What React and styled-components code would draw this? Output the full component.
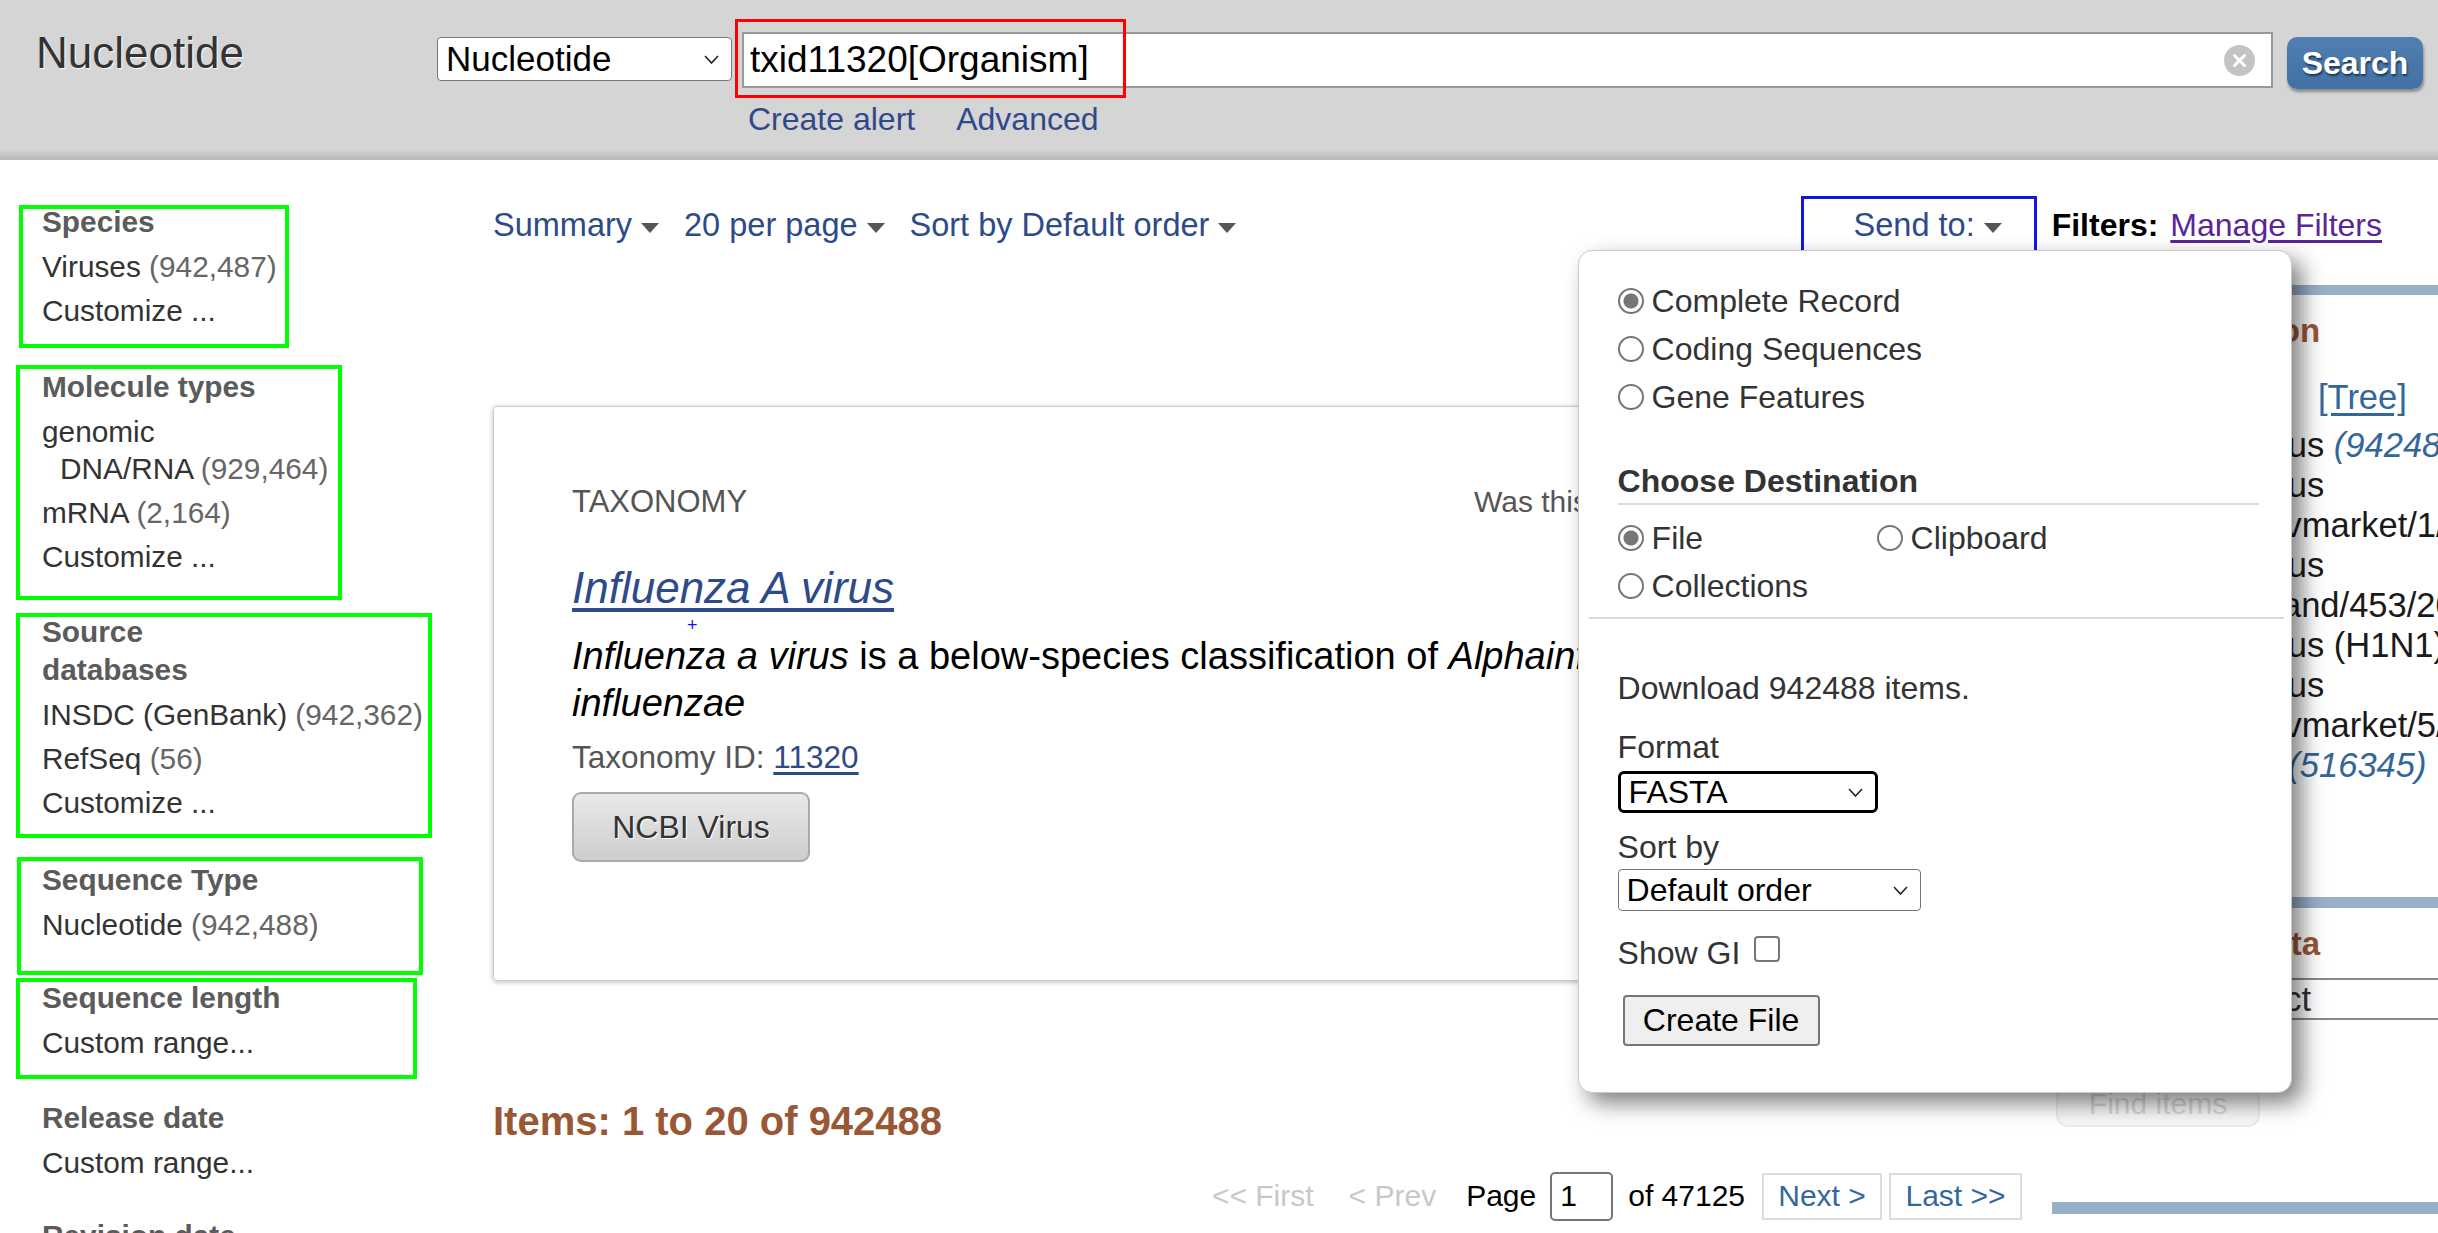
import React from 'react'
import styled, { createGlobalStyle } from 'styled-components'

const GlobalStyle = createGlobalStyle`
  html, body {
    margin: 0;
    padding: 0;
    background: #fff;
    overflow: hidden;
  }
  body {
    font-family: "Liberation Sans", Arial, Helvetica, sans-serif;
    color: #333;
  }
  * {
    box-sizing: border-box;
  }
`

const Page = styled.div`
  width: 2438px;
  height: 1233px;
  overflow: hidden;
`

/* ---------- masthead ---------- */

const Masthead = styled.header`
  height: 160px;
  display: flex;
  align-items: flex-start;
  background: linear-gradient(to bottom, #d5d5d5 0, #d5d5d5 149px, #c6c6c6 155px, #b7b7b7 160px);
`

const DbName = styled.div`
  width: 437px;
  padding: 28px 0 0 36px;
  font-size: 44px;
  line-height: 50px;
  color: #333;
  text-shadow: 1px 1px 1px #fff;
`

const SearchArea = styled.div`
  padding-top: 32px;
  display: flex;
  flex-direction: column;
`

const SearchRow = styled.div`
  display: flex;
  align-items: flex-start;
`

const SelectBox = styled.div`
  margin-top: ${p => p.$mt || 0}px;
  width: ${p => p.$w}px;
  height: ${p => p.$h || 42}px;
  padding: 0 12px 0 8px;
  display: flex;
  align-items: center;
  justify-content: space-between;
  background: #fff;
  border: ${p => (p.$focus ? '3px solid #000' : '1px solid #767676')};
  border-radius: ${p => (p.$focus ? 6 : 4)}px;
  font-size: ${p => p.$fs || 32}px;
  color: #000;
  white-space: nowrap;
  overflow: hidden;
`

const TermField = styled.div`
  position: relative;
  margin-left: 10px;
  width: 1531px;
  height: 56px;
  display: flex;
  align-items: center;
  background: #fff;
  border: 2px solid #999;
  padding: 0 16px 0 6px;
`

const TermInput = styled.input`
  flex: 1;
  border: none;
  outline: none;
  padding: 0;
  background: transparent;
  font-family: inherit;
  font-size: 37px;
  color: #000;
`

const Highlight = styled.div`
  position: absolute;
  left: ${p => p.$x}px;
  top: ${p => p.$y}px;
  width: ${p => p.$w}px;
  height: ${p => p.$h}px;
  border: 3px solid ${p => p.$color};
  pointer-events: none;
`

const SearchButton = styled.button`
  margin: 5px 0 0 14px;
  width: 136px;
  height: 52px;
  border: none;
  border-radius: 10px;
  background: linear-gradient(#527fb2, #4170a4);
  color: #fff;
  font-family: "Liberation Sans", Arial, sans-serif;
  font-weight: bold;
  font-size: 32px;
  text-shadow: 1px 2px 2px #1d3553;
  box-shadow: 1px 3px 3px rgba(0, 0, 0, 0.35);
`

const SearchLinks = styled.div`
  margin-top: 12px;
  padding-left: 311px;
  display: flex;
  gap: 41px;
  font-size: 32px;
  line-height: 36px;
  color: #30498a;
`

/* ---------- body ---------- */

const Body = styled.div`
  display: grid;
  grid-template-columns: 493px 1945px;
`

const Sidebar = styled.aside`
  padding: 45px 0 0 16px;
  display: flex;
  flex-direction: column;
`

const Facet = styled.section`
  width: ${p => p.$w}px;
  margin: ${p => p.$mt}px 0 0 ${p => p.$ml}px;
  padding: 0 0 ${p => p.$pb}px ${p => 22 - p.$ml}px;
  border: 4px solid ${p => (p.$boxed ? '#00ff00' : 'transparent')};
`

const FacetTitle = styled.h3`
  margin: ${p => p.$ht}px 0 0;
  font-size: 29.8px;
  line-height: 38px;
  font-weight: bold;
  color: #5b5b5b;
`

const FacetItem = styled.div`
  margin-top: 7px;
  font-size: 29.8px;
  line-height: 37px;
  color: #333;
  white-space: nowrap;
  padding-left: ${p => (p.$hang ? 18 : 0)}px;
  text-indent: ${p => (p.$hang ? -18 : 0)}px;
`

const Count = styled.span`
  color: #666;
`

const Content = styled.div`
  display: flex;
  flex-direction: column;
`

const Toolbar = styled.div`
  margin-top: 45px;
  height: 40px;
  padding-right: 56px;
  display: flex;
  align-items: center;
  justify-content: space-between;
`

const ToolGroup = styled.div`
  display: flex;
  align-items: center;
  gap: ${p => p.$gap}px;
`

const ToolLink = styled.span`
  position: relative;
  display: inline-flex;
  align-items: center;
  font-size: 32.5px;
  line-height: 40px;
  color: #2d4a8a;
  white-space: nowrap;
`

const Caret = styled.span`
  margin: 6px 0 0 9px;
  border-left: 9px solid transparent;
  border-right: 9px solid transparent;
  border-top: 10px solid #555;
`

const FilterLabel = styled.span`
  font-size: 32px;
  font-weight: bold;
  color: #000;
`

const FilterLink = styled.span`
  margin-left: 12px;
  font-size: 32px;
  color: #5b2597;
  text-decoration: underline;
  text-underline-offset: 4px;
`

const Columns = styled.div`
  display: grid;
  grid-template-columns: 1527px 386px;
  column-gap: 32px;
`

const MainCol = styled.main`
  padding-top: 161px;
  display: flex;
  flex-direction: column;
`

const Card = styled.section`
  position: relative;
  height: 575px;
  padding: 77px 60px 0 78px;
  border: 1px solid #cfcfcf;
  border-radius: 4px;
  box-shadow: 0 1px 5px rgba(0, 0, 0, 0.28);
`

const CardHead = styled.div`
  display: flex;
  justify-content: space-between;
  font-size: 31px;
  line-height: 36px;
  color: #555;
`

const Helpful = styled.div`
  width: 485px;
  font-size: 30px;
  white-space: nowrap;
`

const TaxTitle = styled.a`
  display: inline-block;
  margin-top: 43px;
  font-size: 44px;
  line-height: 50px;
  font-style: italic;
  color: #2d4a8a;
  text-decoration: underline;
  text-underline-offset: 5px;
`

const Cursor = styled.span`
  position: absolute;
  left: 193px;
  top: 208px;
  font-size: 18px;
  line-height: 20px;
  color: #1010ff;
`

const Description = styled.p`
  margin: 20px 0 0;
  max-width: 1300px;
  font-size: 38px;
  line-height: 47px;
  color: #000;
`

const TaxId = styled.div`
  margin-top: 10px;
  font-size: 31.5px;
  line-height: 40px;
  color: #555;
  a {
    color: #2d4a8a;
    text-decoration: underline;
    text-underline-offset: 4px;
  }
`

const VirusButton = styled.button`
  display: block;
  margin-top: 15px;
  width: 238px;
  height: 70px;
  border: 2px solid #aaa;
  border-radius: 9px;
  background: linear-gradient(#e9e9e9, #cdcdcd);
  font-family: inherit;
  font-size: 32px;
  color: #333;
  text-shadow: 1px 1px 0 #fff;
`

const ItemsCount = styled.h2`
  margin: 117px 0 0;
  font-size: 40px;
  line-height: 46px;
  font-weight: bold;
  color: #985735;
`

const Pager = styled.div`
  margin: 27px -2px 0 0;
  height: 50px;
  display: flex;
  align-items: center;
  justify-content: flex-end;
  font-size: 30px;
  color: #000;
`

const PagerText = styled.span`
  margin-left: ${p => p.$ml || 0}px;
  color: ${p => (p.$muted ? '#c8c8c8' : '#000')};
  white-space: nowrap;
`

const PageInput = styled.div`
  margin-left: 14px;
  width: 63px;
  height: 49px;
  padding-left: 8px;
  display: flex;
  align-items: center;
  border: 2px solid #767676;
  border-radius: 5px;
`

const PagerButton = styled.span`
  margin-left: ${p => p.$ml}px;
  width: ${p => p.$w}px;
  height: 47px;
  display: flex;
  align-items: center;
  justify-content: center;
  border: 2px solid #dcdcdc;
  color: #35679f;
  white-space: nowrap;
`

/* ---------- right column ---------- */

const RightCol = styled.aside`
  overflow: hidden;
  font-size: 34.5px;
`

const PortletBar = styled.div`
  margin-top: ${p => p.$mt}px;
  height: ${p => p.$h}px;
  background: #98afc8;
`

const PortletTitle = styled.h3`
  margin: 18px 0 0;
  padding-left: 4px;
  font-size: 33px;
  line-height: 36px;
  font-weight: bold;
  color: #985735;
  white-space: nowrap;
`

const SubTitle = styled.div`
  margin-top: 28px;
  padding-left: 9px;
  line-height: 40px;
  color: #333;
  white-space: nowrap;
  a {
    margin-left: 25px;
    color: #336699;
    text-decoration: underline;
    text-underline-offset: 4px;
  }
`

const OrgList = styled.div`
  margin-top: 8px;
  padding-left: 21px;
`

const OrgLine = styled.div`
  line-height: 40px;
  color: #1a1a1a;
  white-space: nowrap;
`

const OrgCount = styled.i`
  margin-left: ${p => p.$gap || 0}px;
  color: #336699;
`

const DbRow = styled.div`
  margin-top: 16px;
  height: 42px;
  display: flex;
  align-items: center;
  white-space: nowrap;
`

const DbPick = styled.div`
  margin-left: 2px;
  width: 260px;
  height: 42px;
  padding-left: 2px;
  display: flex;
  align-items: center;
  border: 2px solid #888;
  border-right: none;
  border-radius: 4px 0 0 4px;
`

const FindButton = styled.div`
  margin: 61px 0 0 4px;
  width: 204px;
  height: 46px;
  display: flex;
  align-items: center;
  justify-content: center;
  border: 2px solid #ececec;
  border-radius: 12px;
  background: #f7f7f7;
  color: #d6d6d6;
  font-size: 30px;
`

/* ---------- send to popup ---------- */

const SendMenu = styled.div`
  position: absolute;
  left: -276px;
  top: 45px;
  width: 714px;
  height: 843px;
  padding: 26px 0 0 39px;
  z-index: 10;
  background: #fff;
  border: 1px solid #c8c8c8;
  border-radius: 14px;
  box-shadow: 10px 10px 22px rgba(0, 0, 0, 0.5);
  font-size: 32px;
  color: #333;
`

const ChoiceGrid = styled.div`
  display: grid;
  grid-template-columns: ${p => p.$cols || '1fr'};
`

const Choice = styled.label`
  height: 48px;
  display: flex;
  align-items: center;
  white-space: nowrap;
`

const Radio = styled.span`
  width: 26px;
  height: 26px;
  margin-right: 8px;
  border-radius: 50%;
  border: 2px solid #767676;
  background: ${p => (p.$on ? 'radial-gradient(circle, #767676 0 7px, #fff 8px)' : '#fff')};
`

const MenuHeading = styled.div`
  margin-top: 41px;
  width: 641px;
  padding-bottom: 3px;
  border-bottom: 2px solid #dadada;
  font-weight: bold;
  line-height: 38px;
`

const ChoiceBlock = styled.div`
  margin-top: 9px;
`

const Rule = styled.div`
  margin: 7px 0 0 -29px;
  width: 695px;
  border-top: 2px solid #dadada;
`

const MenuText = styled.div`
  margin-top: ${p => p.$mt}px;
  line-height: 38px;
  display: flex;
  align-items: center;
`

const CheckBox = styled.span`
  margin: -8px 0 0 14px;
  width: 26px;
  height: 26px;
  border: 2px solid #767676;
  border-radius: 4px;
  background: #fff;
`

const CreateButton = styled.button`
  display: block;
  margin: 23px 0 0 5px;
  width: 197px;
  height: 51px;
  border: 2px solid #767676;
  border-radius: 4px;
  background: #efefef;
  font-family: inherit;
  font-size: 32px;
  color: #000;
`

const Chevron = () => (
  <svg width="15" height="9" viewBox="0 0 15 9">
    <polyline points="1,1 7.5,8 14,1" fill="none" stroke="#222" strokeWidth="1.6" />
  </svg>
)

const ClearIcon = () => (
  <svg width="31" height="31" viewBox="0 0 31 31">
    <circle cx="15.5" cy="15.5" r="15.5" fill="#c4c4c4" />
    <path d="M10.5 10.5 L20.5 20.5 M20.5 10.5 L10.5 20.5" stroke="#fff" strokeWidth="3" strokeLinecap="round" />
  </svg>
)

const facets = [
  {
    title: ['Species'],
    items: [{ label: ['Viruses'], count: '(942,487)' }, { label: ['Customize ...'] }],
    box: { w: 270, ml: 3, mt: 0, ht: -6, pb: 15, boxed: true },
  },
  {
    title: ['Molecule types'],
    items: [
      { label: ['genomic', 'DNA/RNA'], count: '(929,464)', hang: true },
      { label: ['mRNA'], count: '(2,164)' },
      { label: ['Customize ...'] },
    ],
    box: { w: 326, ml: 0, mt: 17, ht: -1, pb: 21, boxed: true },
  },
  {
    title: ['Source', 'databases'],
    items: [
      { label: ['INSDC (GenBank)'], count: '(942,362)' },
      { label: ['RefSeq'], count: '(56)' },
      { label: ['Customize ...'] },
    ],
    box: { w: 416, ml: 0, mt: 13, ht: -4, pb: 13, boxed: true },
  },
  {
    title: ['Sequence Type'],
    items: [{ label: ['Nucleotide'], count: '(942,488)' }],
    box: { w: 406, ml: 1, mt: 19, ht: 0, pb: 28, boxed: true },
  },
  {
    title: ['Sequence length'],
    items: [{ label: ['Custom range...'] }],
    box: { w: 401, ml: 0, mt: 3, ht: -3, pb: 14, boxed: true },
  },
  {
    title: ['Release date'],
    items: [{ label: ['Custom range...'] }],
    box: { w: 420, ml: 0, mt: 16, ht: 0, pb: 0, boxed: false },
  },
  {
    title: ['Revision date'],
    items: [{ label: ['Custom range...'] }],
    box: { w: 420, ml: 0, mt: 28, ht: 0, pb: 0, boxed: false },
  },
]

const organisms = [
  { text: 'Influenza A virus', count: ' (942488)' },
  { text: 'Influenza A virus' },
  { text: '(A/duck/Tibet/vmarket/1/2019(H9N2))' },
  { text: 'Influenza A virus' },
  { text: '(A/swan/Thailand/453/2011)' },
  { text: 'Influenza A virus (H1N1)' },
  { text: 'Influenza A virus' },
  { text: '(A/duck/Tibet/vmarket/5/2019(H9N2))' },
  { text: 'All other taxa', count: '(516345)', gap: 14 },
]

const joinLines = lines =>
  lines.map((line, i) => (
    <React.Fragment key={i}>
      {i > 0 && <br />}
      {line}
    </React.Fragment>
  ))

const SendToMenu = () => (
  <SendMenu>
    <ChoiceGrid>
      <Choice><Radio $on />Complete Record</Choice>
      <Choice><Radio />Coding Sequences</Choice>
      <Choice><Radio />Gene Features</Choice>
    </ChoiceGrid>
    <MenuHeading>Choose Destination</MenuHeading>
    <ChoiceBlock>
      <ChoiceGrid $cols="259px 1fr">
        <Choice><Radio $on />File</Choice>
        <Choice><Radio />Clipboard</Choice>
        <Choice><Radio />Collections</Choice>
      </ChoiceGrid>
    </ChoiceBlock>
    <Rule />
    <MenuText $mt={50}>Download 942488 items.</MenuText>
    <MenuText $mt={21}>Format</MenuText>
    <SelectBox $mt={5} $w={260} $focus>
      FASTA
      <Chevron />
    </SelectBox>
    <MenuText $mt={15}>Sort by</MenuText>
    <SelectBox $mt={3} $w={303}>
      Default order
      <Chevron />
    </SelectBox>
    <MenuText $mt={23}>
      Show GI
      <CheckBox />
    </MenuText>
    <CreateButton>Create File</CreateButton>
  </SendMenu>
)

export default function App() {
  return (
    <Page>
      <GlobalStyle />
      <Masthead>
        <DbName>Nucleotide</DbName>
        <SearchArea>
          <SearchRow>
            <SelectBox $mt={5} $w={295} $h={44} $fs={35}>
              Nucleotide
              <Chevron />
            </SelectBox>
            <TermField>
              <TermInput readOnly value="txid11320[Organism]" />
              <ClearIcon />
              <Highlight $x={-9} $y={-15} $w={391} $h={79} $color="#ff0000" />
            </TermField>
            <SearchButton>Search</SearchButton>
          </SearchRow>
          <SearchLinks>
            <span>Create alert</span>
            <span>Advanced</span>
          </SearchLinks>
        </SearchArea>
      </Masthead>

      <Body>
        <Sidebar>
          {facets.map(f => (
            <Facet key={f.title.join(' ')} $w={f.box.w} $ml={f.box.ml} $mt={f.box.mt} $pb={f.box.pb} $boxed={f.box.boxed}>
              <FacetTitle $ht={f.box.ht}>{joinLines(f.title)}</FacetTitle>
              {f.items.map((it, i) => (
                <FacetItem key={i} $hang={it.hang}>
                  {joinLines(it.label)}
                  {it.count && <Count> {it.count}</Count>}
                </FacetItem>
              ))}
            </Facet>
          ))}
        </Sidebar>

        <Content>
          <Toolbar>
            <ToolGroup $gap={25}>
              <ToolLink>Summary<Caret /></ToolLink>
              <ToolLink>20 per page<Caret /></ToolLink>
              <ToolLink>Sort by Default order<Caret /></ToolLink>
            </ToolGroup>
            <ToolGroup $gap={50}>
              <ToolLink>
                Send to:<Caret />
                <Highlight $x={-53} $y={-9} $w={236} $h={68} $color="#1414e6" />
                <SendToMenu />
              </ToolLink>
              <span>
                <FilterLabel>Filters:</FilterLabel>
                <FilterLink>Manage Filters</FilterLink>
              </span>
            </ToolGroup>
          </Toolbar>

          <Columns>
            <MainCol>
              <Card>
                <CardHead>
                  <span>TAXONOMY</span>
                  <Helpful>Was this helpful?</Helpful>
                </CardHead>
                <TaxTitle>Influenza A virus</TaxTitle>
                <Cursor>+</Cursor>
                <Description>
                  <i>Influenza a virus</i> is a below-species classification of <i>Alphainfluenzavirus influenzae</i>
                </Description>
                <TaxId>
                  Taxonomy ID: <a>11320</a>
                </TaxId>
                <VirusButton>NCBI Virus</VirusButton>
              </Card>

              <ItemsCount>Items: 1 to 20 of 942488</ItemsCount>

              <Pager>
                <PagerText $muted>&lt;&lt; First</PagerText>
                <PagerText $muted $ml={35}>&lt; Prev</PagerText>
                <PagerText $ml={30}>Page</PagerText>
                <PageInput>1</PageInput>
                <PagerText $ml={15}>of 47125</PagerText>
                <PagerButton $ml={17} $w={120}>Next &gt;</PagerButton>
                <PagerButton $ml={7} $w={133}>Last &gt;&gt;</PagerButton>
              </Pager>
            </MainCol>

            <RightCol>
              <PortletBar $mt={40} $h={10} />
              <PortletTitle>Results by taxon</PortletTitle>
              <SubTitle>
                Top Organisms<a>[Tree]</a>
              </SubTitle>
              <OrgList>
                {organisms.map((o, i) => (
                  <OrgLine key={i}>
                    {o.text}
                    {o.count && <OrgCount $gap={o.gap}>{o.count}</OrgCount>}
                  </OrgLine>
                ))}
              </OrgList>
              <PortletBar $mt={112} $h={11} />
              <PortletTitle>Find related data</PortletTitle>
              <DbRow>
                Database:
                <DbPick>Select</DbPick>
              </DbRow>
              <FindButton>Find items</FindButton>
              <PortletBar $mt={75} $h={12} />
            </RightCol>
          </Columns>
        </Content>
      </Body>
    </Page>
  )
}
